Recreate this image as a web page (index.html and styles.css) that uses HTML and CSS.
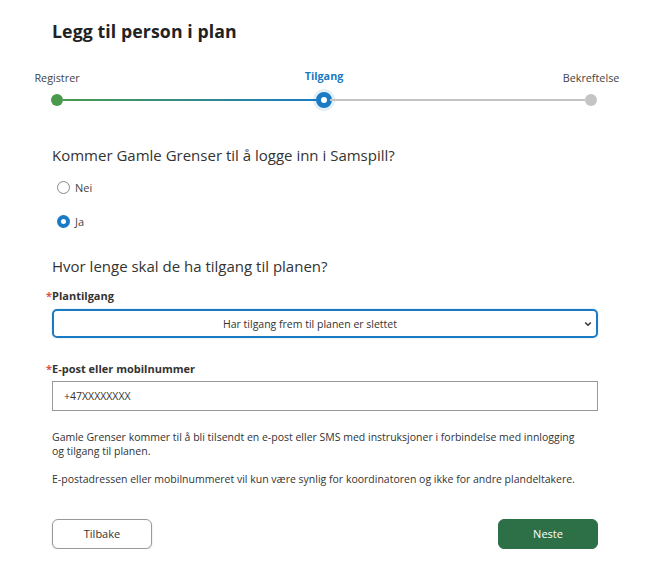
FILE: index.html
```html
<!DOCTYPE html>
<html lang="no">
<head>
<meta charset="utf-8">
<title>Legg til person i plan</title>
<link rel="stylesheet" href="styles.css">
</head>
<body>
<div class="page">
  <h1 class="title">Legg til person i plan</h1>

  <div class="stepper">
    <div class="step">
      <span class="step-label">Registrer</span>
      <span class="dot dot-done"></span>
    </div>
    <div class="line line-done"></div>
    <div class="step">
      <span class="step-label step-label-active">Tilgang</span>
      <span class="dot dot-active"></span>
    </div>
    <div class="line line-todo"></div>
    <div class="step">
      <span class="step-label">Bekreftelse</span>
      <span class="dot dot-todo"></span>
    </div>
  </div>

  <div class="form">
    <h2 class="question">Kommer Gamle Grenser til å logge inn i Samspill?</h2>
    <label class="radio"><span class="radio-circle"></span><span>Nei</span></label>
    <label class="radio"><span class="radio-circle radio-checked"></span><span>Ja</span></label>

    <h2 class="question question-2">Hvor lenge skal de ha tilgang til planen?</h2>

    <div class="field-label"><span class="req">*</span>Plantilgang</div>
    <div class="select">
      <span class="select-text">Har tilgang frem til planen er slettet</span>
      <svg class="chevron" width="8" height="6" viewBox="0 0 8 6"><path d="M1.2 1.5 L4 4.3 L6.8 1.5" fill="none" stroke="#333" stroke-width="1.5"/></svg>
    </div>

    <div class="field-label field-label-2"><span class="req">*</span>E-post eller mobilnummer</div>
    <div class="input">+47XXXXXXXX</div>

    <p class="info">Gamle Grenser kommer til å bli tilsendt en e-post eller SMS med instruksjoner i forbindelse med innlogging og tilgang til planen.</p>
    <p class="info info-2">E-postadressen eller mobilnummeret vil kun være synlig for koordinatoren og ikke for andre plandeltakere.</p>

    <div class="actions">
      <button class="btn btn-back">Tilbake</button>
      <button class="btn btn-next">Neste</button>
    </div>
  </div>
</div>
</body>
</html>
```
FILE: styles.css
```css
* { box-sizing: border-box; }
html, body { margin: 0; padding: 0; background: #fff; }
body {
  font-family: "Open Sans", "Noto Sans", sans-serif;
  color: #333;
  width: 662px;
}
.page {
  padding: 19px 0 0 0;
}
.title {
  margin: 0 0 0 52px;
  font-size: 17.7px;
  font-weight: 700;
  color: #222;
  line-height: 24px;
  letter-spacing: 0.1px;
}
.stepper {
  margin: 25px 0 0 51px;
  width: 546px;
  display: flex;
  align-items: flex-end;
  height: 40px;
}
.step {
  width: 12px;
  display: flex;
  flex-direction: column;
  align-items: center;
  flex: 0 0 12px;
}
.step-label {
  white-space: nowrap;
  font-size: 10.8px;
  line-height: 14px;
  color: #444;
  margin-bottom: 9px;
}
.step-label-active {
  color: #1a7bc4;
  font-weight: 700;
}
.dot {
  display: block;
  border-radius: 50%;
}
.dot-done { width: 12px; height: 12px; background: #4a9a4e; margin-bottom: 2px; }
.dot-todo { width: 12px; height: 12px; background: #c4c4c4; margin-bottom: 2px; }
.dot-active {
  width: 16px; height: 16px;
  background: #fff;
  border: 5px solid #1a7bc4;
  box-shadow: 0 0 0 3px rgba(26,123,196,0.12);
}
.line {
  flex: 1;
  height: 2px;
  margin-bottom: 7px;
}
.line-done { background: linear-gradient(90deg, #4a9a4e, #1a7bc4); }
.line-todo { background: #c4c4c4; }

.form {
  padding-left: 52px;
  width: 598px;
}
.question {
  margin: 36px 0 0 0;
  font-size: 15px;
  font-weight: 400;
  line-height: 22px;
  color: #333;
}
.question-2 { margin-top: 27px; }
.radio {
  display: flex;
  align-items: center;
  gap: 5px;
  font-size: 11px;
  color: #444;
  height: 14px;
  margin-top: 14px;
  margin-left: 5px;
}
.radio + .radio { margin-top: 20px; }
.radio-circle {
  width: 13px;
  height: 13px;
  border-radius: 50%;
  border: 1px solid #888;
  background: #fff;
}
.radio-checked {
  border: 4px solid #1a7bc4;
}
.field-label {
  margin-top: 12px;
  font-size: 11px;
  font-weight: 700;
  line-height: 14px;
  color: #333;
  margin-left: -6px;
}
.field-label-2 { margin-top: 24px; }
.req { color: #d9534f; font-weight: 700; }
.select {
  margin-top: 6px;
  height: 29px;
  border: 2px solid #1a7bc4;
  border-radius: 5px;
  display: flex;
  align-items: center;
  padding: 0 4px 0 0;
  box-shadow: 0 0 2px rgba(26,123,196,0.3);
}
.select-text {
  flex: 1;
  text-align: center;
  font-size: 10.5px;
  color: #333;
}
.chevron { flex: 0 0 auto; margin-left: 18px; }
.input {
  margin-top: 5px;
  height: 30px;
  border: 1px solid #999;
  display: flex;
  align-items: center;
  padding-left: 11px;
  font-size: 10.5px;
  color: #333;
}
.info {
  margin: 20px 0 0 0;
  font-size: 10.5px;
  line-height: 13.5px;
  color: #333;
  padding-right: 12px;
}
.info-2 { margin-top: 15px; }
.actions {
  display: flex;
  justify-content: space-between;
  margin-top: 32px;
}
.btn {
  font-family: "Open Sans", "Noto Sans", sans-serif;
  font-size: 11px;
  height: 30px;
  width: 100px;
  border-radius: 6px;
  cursor: pointer;
}
.btn-back {
  background: #fff;
  border: 1px solid #999;
  color: #333;
  box-shadow: 0 1px 2px rgba(0,0,0,0.15);
}
.btn-next {
  background: #2d7048;
  border: 1px solid #2d7048;
  color: #fff;
}
```
